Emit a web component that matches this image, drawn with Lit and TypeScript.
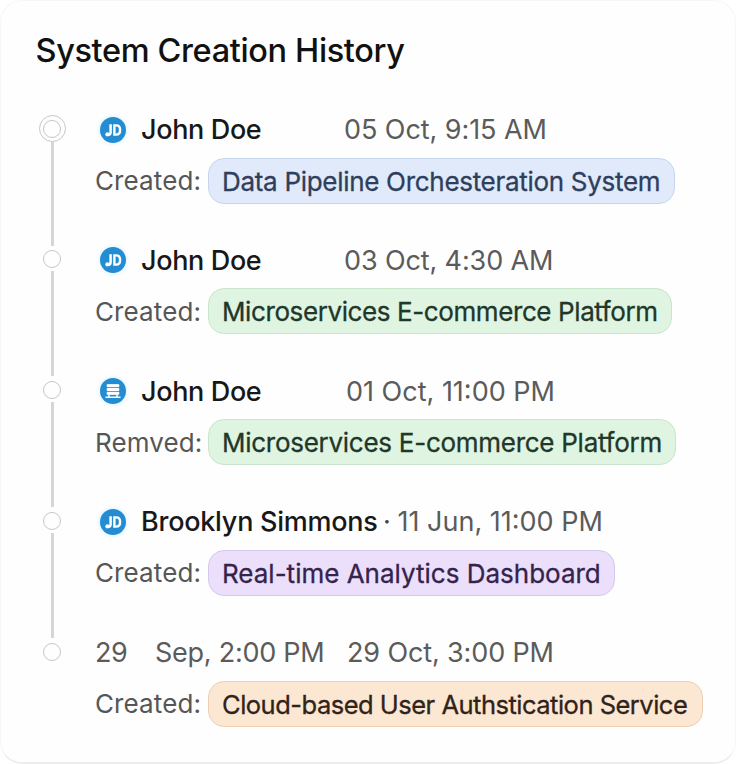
import { LitElement, html, css, svg, nothing } from "lit";
import { customElement, property } from "lit/decorators.js";
import { classMap } from "lit/directives/class-map.js";
import { styleMap } from "lit/directives/style-map.js";

type Tone = "blue" | "green" | "purple" | "orange";
interface Part { text: string; kind: "name" | "date" | "dot"; width: number; gap: number; spacing: number; }
interface Entry { avatar?: "jd" | "list"; parts: Part[]; action: string; system: string; tone: Tone; width: number; spacing: number; }

const name = (text: string, width: number, spacing = 0): Part => ({ text, kind: "name", width, gap: 15.5, spacing });
const date = (text: string, width: number, gap: number, spacing = 0): Part => ({ text, kind: "date", width, gap, spacing });

const entries: Entry[] = [
  { avatar: "jd", parts: [name("John Doe", 120, -0.35), date("05 Oct, 9:15 AM", 203, 83, -0.07)], action: "Created:", system: "Data Pipeline Orchesteration System", tone: "blue", width: 467, spacing: -0.3 },
  { avatar: "jd", parts: [name("John Doe", 120, -0.35), date("03 Oct, 4:30 AM", 209, 83, -0.12)], action: "Created:", system: "Microservices E-commerce Platform", tone: "green", width: 464, spacing: -0.4 },
  { avatar: "list", parts: [name("John Doe", 120, -0.35), date("01 Oct, 11:00 PM", 208, 85)], action: "Remved:", system: "Microservices E-commerce Platform", tone: "green", width: 468, spacing: -0.27 },
  { avatar: "jd", parts: [name("Brooklyn Simmons", 237, -0.25), { text: "·", kind: "dot", width: 8, gap: 5, spacing: 0 }, date("11 Jun, 11:00 PM", 206, 6.5)], action: "Created:", system: "Real-time Analytics Dashboard", tone: "purple", width: 407, spacing: 0 },
  { parts: [date("29", 32, 0, -0.5), date("Sep, 2:00 PM", 169, 28, -0.25), date("29 Oct, 3:00 PM", 208, 23, -0.13)], action: "Created:", system: "Cloud-based User Authstication Service", tone: "orange", width: 495, spacing: -0.5 },
];

@customElement("user-avatar")
class UserAvatar extends LitElement {
  @property() kind = "jd";
  static styles = css`
    :host { display: block; width: 26px; height: 26px; border-radius: 50%; background: #248dd2; box-shadow: 0 0 5px #c9edff; }
    svg { display: block; }
  `;
  render() {
    return html`<svg width="26" height="26" viewBox="0 0 26 26" fill="none" stroke="#fff">
      ${this.kind === "jd"
        ? svg`<path d="M10.6 7.3v7.9q0 2.4-2.2 2.7L5.8 18" stroke-width="2.5"/><circle cx="7.3" cy="17.2" r="1.9" fill="#fff" stroke="none"/><path d="M14.4 8.4h1.9q3.8 0 3.8 4.6t-3.8 4.6h-1.9z" stroke-width="2.4"/>`
        : svg`<path d="M7.2 6.7h11.6v2h-11.6zM7.2 10.5h11.6v2h-11.6zM7.2 14.3h11.6v2h-11.6z" fill="#fff" stroke-width="1"/><path d="M5.5 19.3h15M9 16.8v2.5M17 16.8v2.5" stroke-width="1.5"/>`}
    </svg>`;
  }
}

@customElement("app-root")
class AppRoot extends LitElement {
  static styles = css`
    :host { display: block; height: 764px; background: #fff; font-family: Inter, "Liberation Sans", sans-serif; }
    .card { box-sizing: border-box; height: 764px; padding: 30px 0 0 34.5px; border: 1px solid #f6f6f7; border-bottom: 2px solid #ededee; border-radius: 22px; background: #fefefe; overflow: hidden; }
    h1 { margin: 0; height: 79px; font-size: 32.5px; line-height: 40px; font-weight: 500; color: #111; white-space: nowrap; letter-spacing: -.36px; }
    .entry { display: flex; height: 130.75px; }
    .rail { width: 33px; margin-right: 26.5px; display: flex; flex-direction: column; align-items: center; flex: none; padding-top: 9.5px; height: 120px; }
    .rail.first { padding-top: 5px; }
    .marker { box-sizing: border-box; width: 18px; height: 18px; border: 1.8px solid #c7c7c7; border-radius: 50%; flex: none; }
    .first .marker { width: 27px; height: 27px; display: grid; place-items: center; }
    .inner { box-sizing: border-box; width: 18px; height: 18px; border: 1.8px solid #c7c7c7; border-radius: 50%; }
    .line { width: 3px; height: 105px; background: #d6d6d6; margin-top: 3px; flex: none; }
    .first .line { margin-top: 0; height: 104px; }
    .head { display: flex; align-items: center; height: 40px; font-size: 27px; line-height: 40px; white-space: nowrap; }
    .head user-avatar { margin: -1px 0 0 4.5px; flex: none; }
    .part { flex: none; color: #5b5b5b; font-weight: 400; }
    .part.name { font-weight: 500; color: #181818; }
    .dot { color: #444; }
    .change { display: flex; align-items: center; margin-top: 7.5px; }
    .action { width: 113px; font-size: 26px; line-height: 46px; padding-top: .5px; margin-bottom: -.5px; color: #565656; white-space: nowrap; flex: none; letter-spacing: .12px; }
    .chip { box-sizing: border-box; height: 46px; padding-left: 13px; border: 1px solid; border-radius: 16px; font-size: 26px; line-height: 45px; white-space: nowrap; -webkit-text-stroke: .3px currentColor; }
    .blue { background: #e1eafb; border-color: #c7d5ed; color: #2e3e5c; }
    .green { background: #e0f4e2; border-color: #c9e5cc; color: #21372a; }
    .purple { background: #ecdffb; border-color: #d3c9ea; color: #35234b; }
    .orange { background: #fce7d3; border-color: #eccfb3; color: #30231a; font-size: 25.5px; }
  `;
  private entry(e: Entry, i: number) {
    return html`<div class="entry">
      <div class=${classMap({ rail: true, first: i === 0 })}>
        <div class="marker">${i === 0 ? html`<div class="inner"></div>` : nothing}</div>
        ${i < entries.length - 1 ? html`<div class="line"></div>` : nothing}
      </div>
      <div>
        <div class="head">
          ${e.avatar ? html`<user-avatar .kind=${e.avatar}></user-avatar>` : nothing}
          ${e.parts.map(p => html`<span class="part ${p.kind}" style=${styleMap({ width: `${p.width}px`, marginLeft: `${p.gap}px`, letterSpacing: `${p.spacing}px` })}>${p.text}</span>`)}
        </div>
        <div class="change">
          <span class="action">${e.action}</span>
          <span class="chip ${e.tone}" style=${styleMap({ width: `${e.width}px`, letterSpacing: `${e.spacing}px` })}>${e.system}</span>
        </div>
      </div>
    </div>`;
  }
  render() {
    return html`<div class="card"><h1>System Creation History</h1>${entries.map((e, i) => this.entry(e, i))}</div>`;
  }
}
